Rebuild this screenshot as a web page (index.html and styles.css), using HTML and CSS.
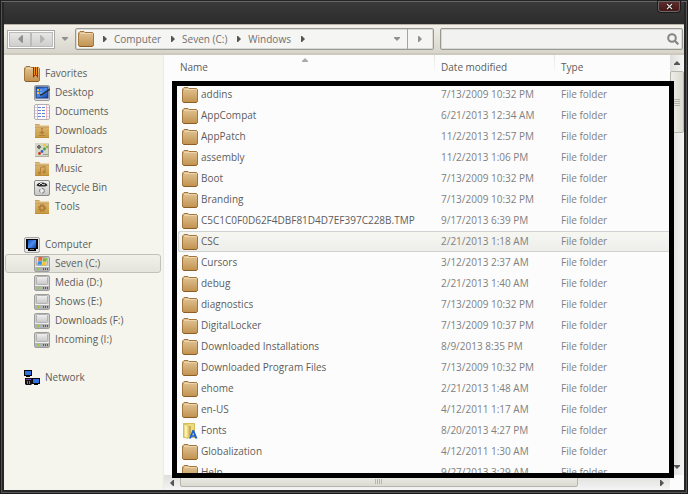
FILE: index.html
```html
<!DOCTYPE html>
<html lang="en">
<head>
<meta charset="utf-8">
<title>Windows</title>
<link rel="stylesheet" href="styles.css">
</head>
<body>
<svg class="defs" aria-hidden="true">
  <defs>
    <linearGradient id="tan" x1="0" y1="0" x2="0" y2="1"><stop offset="0" stop-color="#e2c597"/><stop offset="1" stop-color="#c1924f"/></linearGradient>
    <linearGradient id="gold" x1="0" y1="0" x2="0" y2="1"><stop offset="0" stop-color="#e0bd7c"/><stop offset="1" stop-color="#c89a40"/></linearGradient>
    <linearGradient id="blue" x1="0" y1="0" x2="1" y2="1"><stop offset="0" stop-color="#1450b8"/><stop offset=".5" stop-color="#4c8cf0"/><stop offset="1" stop-color="#0c3c9c"/></linearGradient>
    <linearGradient id="metal" x1="0" y1="0" x2="0" y2="1"><stop offset="0" stop-color="#f2f2f2"/><stop offset="1" stop-color="#c6c6c6"/></linearGradient>
    <symbol id="folder" viewBox="0 0 16 16">
      <path d="M1 4V1.5L2 .5H6L7 1.500H14.500L15.500 2.500V14.500L14.500 15.500H1.500L.5 14.500V2.500Z" fill="url(#tan)" stroke="#a3763c"/>
      <path d="M1.500 3.500L2.500 2.500H13.500L14.500 3.500" fill="none" stroke="#ecd5ae"/>
      <path d="M1 14.500L2 15.500H14L15 14.500" fill="none" stroke="#8c5d24"/>
    </symbol>
    <symbol id="favorites" viewBox="0 0 16 16">
      <use href="#folder" width="16" height="16"/>
      <path d="M9 1H14V12L11.500 9L9 12Z" fill="#b81c08"/>
      <path d="M10.500 1V9M12.500 1V9" stroke="#f49018"/>
    </symbol>
    <symbol id="desktop" viewBox="0 0 16 16">
      <rect x=".5" y=".5" width="15" height="15" rx="1.500" fill="#d9dde3" stroke="#9a9a9c"/>
      <rect x="2" y="2" width="12" height="11" fill="url(#blue)" stroke="#173a78"/>
      <path d="M3 5H5M3 8H5" stroke="#f5c23c" stroke-width="2"/>
      <path d="M6 5H8M6 8H8" stroke="#9fc2f8"/>
      <path d="M16 4L8 9.500L6 10" fill="none" stroke="#2a2d33" stroke-width="1.500"/>
    </symbol>
    <symbol id="documents" viewBox="0 0 16 16">
      <rect x=".5" y=".5" width="15" height="15" rx="1.500" fill="#fafaff" stroke="#b2adb4"/>
      <path d="M3.500 1V15M12.500 1V15" stroke="#f4b3ba"/>
      <path d="M4 3.500H12M4 6.500H12M4 9.500H12M4 12.500H12" stroke="#5f83cd" stroke-dasharray="3 1"/>
      <path d="M1 3.500H3M1 6.500H3M1 9.500H3M1 12.500H3M13 3.500H15M13 6.500H15M13 9.500H15M13 12.500H15" stroke="#e9c5d0"/>
    </symbol>
    <symbol id="goldfolder" viewBox="0 0 16 16">
      <path d="M1 1H5.500L6.500 2.500H15V15H1Z" fill="url(#gold)"/>
      <path d="M1 1.500H5M1 4.500H15" stroke="#c9a468"/>
      <path d="M1 14.500H15" stroke="#bd8c34"/>
    </symbol>
    <symbol id="downloads" viewBox="0 0 16 16">
      <use href="#goldfolder" width="16" height="16"/>
      <path d="M7 5H9V6.500H7ZM7 7.500H9V9H11L8 11.500L5 9H7ZM5 12H11V13H5Z" fill="#b28138"/>
    </symbol>
    <symbol id="emulators" viewBox="0 0 16 16">
      <rect x="1" y="1" width="14" height="14" fill="#d6d6c5"/>
      <path d="M1 14.500H15M14.500 2V15" stroke="#b0b09c"/>
      <path d="M3 5H7M5 3V7" stroke="#6e6e6e" stroke-width="2"/>
      <circle cx="10.500" cy="3" r="1.300" fill="#f0c52a"/><circle cx="13" cy="5" r="1.200" fill="#86b84a"/>
      <circle cx="10.500" cy="7" r="1.400" fill="#3ea03c"/><circle cx="8" cy="9.500" r="1.400" fill="#2a64c8"/>
      <circle cx="5.500" cy="11.500" r="1.400" fill="#d43322"/><path d="M9 12.500H14" stroke="#9a9a8a"/>
    </symbol>
    <symbol id="music" viewBox="0 0 16 16">
      <use href="#goldfolder" width="16" height="16"/>
      <path d="M6.500 12V6.500L11 5.500V11" fill="none" stroke="#b28138"/>
      <circle cx="5.500" cy="12" r="1.500" fill="#b28138"/><circle cx="10" cy="11" r="1.500" fill="#b28138"/>
    </symbol>
    <symbol id="bin" viewBox="0 0 16 16">
      <rect x=".5" y=".5" width="15" height="15" rx="1.500" fill="url(#metal)" stroke="#8b8b8b"/>
      <path d="M2.500 5.500C3 1.500 13 1.500 13.500 5.500L11 6.500H5Z" fill="#28292b"/>
      <path d="M5 5L7 3L9 5L11 4" fill="none" stroke="#d8d8d8"/>
      <circle cx="8" cy="10.800" r="2.400" fill="#ececec" stroke="#777" stroke-dasharray="3.500 1.500"/>
    </symbol>
    <symbol id="tools" viewBox="0 0 16 16">
      <use href="#goldfolder" width="16" height="16"/>
      <circle cx="8" cy="9" r="3.300" fill="none" stroke="#b28138" stroke-width="1.500" stroke-dasharray="1.700 .9"/>
      <circle cx="8" cy="9" r="2.200" fill="none" stroke="#b28138" stroke-width="1.800"/>
    </symbol>
    <symbol id="computer" viewBox="0 0 16 16">
      <rect x=".5" y=".5" width="15" height="15" rx="1.500" fill="#e3e3e3" stroke="#a4a4a4"/>
      <path d="M2 2H14V12H12V14H4V12H2Z" fill="#06080e"/>
      <rect x="4" y="3" width="8" height="8" fill="url(#blue)"/>
      <path d="M6 12.500H10" stroke="#777"/>
    </symbol>
    <symbol id="drive" viewBox="0 0 16 16">
      <rect x=".5" y=".5" width="15" height="15" rx="1.500" fill="#d0d0d0" stroke="#9d9d9d"/>
      <rect x="2.500" y="1.500" width="11" height="8" rx="1" fill="url(#metal)" stroke="#b2b2b2"/>
      <path d="M1 11H15V15H1Z" fill="#b2b2b2"/>
      <path d="M1 10.500H15" stroke="#eee"/>
      <path d="M3 13H5" stroke="#8bd136" stroke-width="2"/>
      <path d="M9.500 12V14M11.500 12V14M13.500 12V14" stroke="#5c5c5c"/>
    </symbol>
    <symbol id="windrive" viewBox="0 0 16 16">
      <use href="#drive" width="16" height="16"/>
      <path d="M4.500 1.500Q6.500 .2 8.500 1.500L8 5Q6 4 4 5Z" fill="#ee622c"/>
      <path d="M9 1.700Q11 3 13 1.700L12.500 5.200Q10.500 6.200 8.500 5.200Z" fill="#80b83b"/>
      <path d="M4 5.500Q6 4.500 8 5.500L7.500 9Q5.500 8 3.500 9Z" fill="#3f8fdc"/>
      <path d="M8.500 5.700Q10.500 7 12.500 5.700L12 9.200Q10 10 8 9.200Z" fill="#f7c530"/>
    </symbol>
    <symbol id="network" viewBox="0 0 16 16">
      <path d="M0 0H8V6H6V7H2V6H0Z" fill="#080808"/><rect x="1" y="1" width="6" height="4" fill="#2e71df"/>
      <path d="M8 8H16V14H14V15H10V14H8Z" fill="#080808"/><rect x="9" y="9" width="6" height="4" fill="#2e71df"/>
      <path d="M1 8H8V14L7 15H2L1 14Z" fill="#151018"/>
      <path d="M2 9.500H7" stroke="#7540b8"/><path d="M3.500 11V14M5.500 11V14" stroke="#777"/>
    </symbol>
    <symbol id="fonts" viewBox="0 0 16 16">
      <path d="M1.500 .5H12.500V14.500H1.500Z" fill="#ecd980" stroke="#d6bd5b"/>
      <path d="M2 1L6 2.500V15.500L2 14Z" fill="#fbf2ae" stroke="#d6bd5b"/>
      <path d="M7 3H9V13H7Z" fill="#c4ae60"/>
      <path d="M7 15.500L10.500 7H12L15.500 15.500H13.200L12.600 13.800H9.700L9 15.500ZM10.200 12.300H12.100L11.200 9.500Z" fill="#1b61d1"/>
    </symbol>
    <symbol id="right" viewBox="0 0 4 6"><path d="M0 0H1L4 3L1 6H0Z"/></symbol>
    <symbol id="left" viewBox="0 0 4 6"><path d="M4 0H3L0 3L3 6H4Z"/></symbol>
    <symbol id="down" viewBox="0 0 6 4"><path d="M0 0V1L3 4L6 1V0Z"/></symbol>
    <symbol id="up" viewBox="0 0 6 4"><path d="M0 4V3L3 0L6 3V4Z"/></symbol>
  </defs>
</svg>
<div class="window">
  <header class="titlebar">
    <button class="close" aria-label="Close"><svg viewBox="0 0 7 7" width="7" height="7"><path d="M1 1L6 6M6 1L1 6" stroke="#160808" stroke-width="2.600"/><path d="M1 1L6 6M6 1L1 6" stroke="#e9dede" stroke-width="1.200"/></svg></button>
  </header>
  <div class="toolbar">
    <div class="history">
      <button aria-label="Back"><svg class="arrow side big mid"><use href="#left"/></svg></button>
      <button aria-label="Forward"><svg class="arrow side big pale"><use href="#right"/></svg></button>
    </div>
    <button class="recent" aria-label="Recent pages"><svg class="arrow flat mid"><use href="#down"/></svg></button>
    <nav class="address" aria-label="Address">
      <svg class="icon"><use href="#folder"/></svg>
      <svg class="arrow side"><use href="#right"/></svg>
      <a href="#">Computer</a>
      <svg class="arrow side"><use href="#right"/></svg>
      <a href="#">Seven (C:)</a>
      <svg class="arrow side"><use href="#right"/></svg>
      <a href="#">Windows</a>
      <svg class="arrow side"><use href="#right"/></svg>
      <button class="previous" aria-label="Previous locations"><svg class="arrow flat mid"><use href="#down"/></svg></button>
      <button class="go" aria-label="Go"><svg class="arrow side mid"><use href="#right"/></svg></button>
    </nav>
    <label class="search">
      <input type="text" aria-label="Search">
      <svg viewBox="0 0 12 12" width="12" height="12"><circle cx="5" cy="5" r="3.800" fill="none" stroke="#858585" stroke-width="2"/><path d="M7.800 7.800L11.300 11.300" stroke="#858585" stroke-width="2.200"/></svg>
    </label>
  </div>
  <div class="main">
    <nav class="sidebar" aria-label="Folders">
      <section>
        <a class="root" href="#"><svg class="icon"><use href="#favorites"/></svg>Favorites</a>
        <a href="#"><svg class="icon"><use href="#desktop"/></svg>Desktop</a>
        <a href="#"><svg class="icon"><use href="#documents"/></svg>Documents</a>
        <a href="#"><svg class="icon"><use href="#downloads"/></svg>Downloads</a>
        <a href="#"><svg class="icon"><use href="#emulators"/></svg>Emulators</a>
        <a href="#"><svg class="icon"><use href="#music"/></svg>Music</a>
        <a href="#"><svg class="icon"><use href="#bin"/></svg>Recycle Bin</a>
        <a href="#"><svg class="icon"><use href="#tools"/></svg>Tools</a>
      </section>
      <section>
        <a class="root" href="#"><svg class="icon"><use href="#computer"/></svg>Computer</a>
        <a class="selected" href="#"><svg class="icon"><use href="#windrive"/></svg>Seven (C:)</a>
        <a href="#"><svg class="icon"><use href="#drive"/></svg>Media (D:)</a>
        <a href="#"><svg class="icon"><use href="#drive"/></svg>Shows (E:)</a>
        <a href="#"><svg class="icon"><use href="#drive"/></svg>Downloads (F:)</a>
        <a href="#"><svg class="icon"><use href="#drive"/></svg>Incoming (I:)</a>
      </section>
      <section>
        <a class="root" href="#"><svg class="icon"><use href="#network"/></svg>Network</a>
      </section>
    </nav>
    <div class="content">
      <div class="pane">
        <svg class="arrow flat sort"><use href="#up"/></svg>
        <table>
          <colgroup><col class="name"><col class="date"><col></colgroup>
          <thead><tr><th>Name</th><th>Date modified</th><th>Type</th></tr></thead>
          <tbody>
            <tr><td><svg class="icon"><use href="#folder"/></svg>addins</td><td>7/13/2009 10:32 PM</td><td>File folder</td></tr>
            <tr><td><svg class="icon"><use href="#folder"/></svg>AppCompat</td><td>6/21/2013 12:34 AM</td><td>File folder</td></tr>
            <tr><td><svg class="icon"><use href="#folder"/></svg>AppPatch</td><td>11/2/2013 12:57 PM</td><td>File folder</td></tr>
            <tr><td><svg class="icon"><use href="#folder"/></svg>assembly</td><td>11/2/2013 1:06 PM</td><td>File folder</td></tr>
            <tr><td><svg class="icon"><use href="#folder"/></svg>Boot</td><td>7/13/2009 10:32 PM</td><td>File folder</td></tr>
            <tr><td><svg class="icon"><use href="#folder"/></svg>Branding</td><td>7/13/2009 10:32 PM</td><td>File folder</td></tr>
            <tr><td><svg class="icon"><use href="#folder"/></svg>C5C1C0F0D62F4DBF81D4D7EF397C228B.TMP</td><td>9/17/2013 6:39 PM</td><td>File folder</td></tr>
            <tr class="current"><td><svg class="icon"><use href="#folder"/></svg>CSC</td><td>2/21/2013 1:18 AM</td><td>File folder</td></tr>
            <tr><td><svg class="icon"><use href="#folder"/></svg>Cursors</td><td>3/12/2013 2:37 AM</td><td>File folder</td></tr>
            <tr><td><svg class="icon"><use href="#folder"/></svg>debug</td><td>2/21/2013 1:40 AM</td><td>File folder</td></tr>
            <tr><td><svg class="icon"><use href="#folder"/></svg>diagnostics</td><td>7/13/2009 10:32 PM</td><td>File folder</td></tr>
            <tr><td><svg class="icon"><use href="#folder"/></svg>DigitalLocker</td><td>7/13/2009 10:37 PM</td><td>File folder</td></tr>
            <tr><td><svg class="icon"><use href="#folder"/></svg>Downloaded Installations</td><td>8/9/2013 8:35 PM</td><td>File folder</td></tr>
            <tr><td><svg class="icon"><use href="#folder"/></svg>Downloaded Program Files</td><td>7/13/2009 10:32 PM</td><td>File folder</td></tr>
            <tr><td><svg class="icon"><use href="#folder"/></svg>ehome</td><td>2/21/2013 1:48 AM</td><td>File folder</td></tr>
            <tr><td><svg class="icon"><use href="#folder"/></svg>en-US</td><td>4/12/2011 1:17 AM</td><td>File folder</td></tr>
            <tr><td><svg class="icon"><use href="#fonts"/></svg>Fonts</td><td>8/20/2013 4:27 PM</td><td>File folder</td></tr>
            <tr><td><svg class="icon"><use href="#folder"/></svg>Globalization</td><td>4/12/2011 1:30 AM</td><td>File folder</td></tr>
            <tr><td><svg class="icon"><use href="#folder"/></svg>Help</td><td>9/27/2013 3:29 AM</td><td>File folder</td></tr>
          </tbody>
        </table>
      </div>
      <div class="vbar">
        <button aria-label="Scroll up"><svg class="arrow flat"><use href="#up"/></svg></button>
        <div class="vtrack"><div class="thumb"><i></i></div></div>
        <button aria-label="Scroll down"><svg class="arrow flat"><use href="#down"/></svg></button>
      </div>
      <div class="hbar">
        <button aria-label="Scroll left"><svg class="arrow side"><use href="#left"/></svg></button>
        <div class="htrack"><div class="thumb"><i></i></div></div>
        <button aria-label="Scroll right"><svg class="arrow side"><use href="#right"/></svg></button>
      </div>
      <div class="highlight"></div>
    </div>
  </div>
</div>
</body>
</html>
```
FILE: styles.css
```css
* { box-sizing: border-box; }

body {
  margin: 0;
  color: #5c5c5c;
  font: 10px/19px "Open Sans", sans-serif;
}

button {
  display: flex;
  align-items: center;
  justify-content: center;
  padding: 0;
  border: 0;
  background: none;
}

a { color: inherit; text-decoration: none; }

.defs { position: absolute; width: 0; height: 0; }
.icon { flex: none; width: 16px; height: 16px; }
.arrow { flex: none; fill: #555; }
.side { width: 4px; height: 6px; }
.flat { width: 6px; height: 4px; }
.big { width: 5px; height: 8px; }
.mid { fill: #919191; }
.pale { fill: #b5b5b5; }

.window {
  display: flex;
  flex-direction: column;
  height: 100vh;
  padding: 0 3px 3px;
  border: 1px solid #1b1a1a;
  border-top-color: #242424;
  background: #272626;
  box-shadow: inset 0 1px #686868, inset 1px 0 #55504c, inset -1px -1px #555;
}

.titlebar {
  display: flex;
  flex: none;
  justify-content: flex-end;
  height: 23px;
  padding-right: 4px;
  background: linear-gradient(#686868 1px, #393939 1px, #2c2c2c);
}

.close {
  width: 22px;
  height: 11px;
  border: 1px solid #6b6464;
  border-radius: 0 0 3px 3px;
  background: linear-gradient(#5c2c2c, #471818);
  box-shadow: 0 0 0 1px #1d1b1b;
}

.toolbar {
  display: flex;
  flex: none;
  align-items: center;
  height: 31px;
  padding: 0 1px 0 3px;
  border-top: 1px solid #b9b2a7;
  border-bottom: 2px solid #cdc9bc;
  background: linear-gradient(#f2f0e9, #e4e2d9 50%, #d8d6cb);
}

.history {
  display: flex;
  height: 19px;
  padding: 1px;
  border: 1px solid #a8a8a6;
  background: #fff;
}

.history button {
  width: 22px;
  border: 1px solid #bbb;
  background: linear-gradient(#e6e6e5, #cfcfce);
}

.recent { width: 20px; height: 19px; }

.address {
  display: flex;
  align-items: center;
  flex: 360 1 0;
  height: 22px;
  padding-left: 2px;
  border: 1px solid #999994;
  border-radius: 2px;
  background: #f5f5f3;
  box-shadow: inset 0 0 0 1px #d9d9d6;
  color: #707070;
}

.address .icon { margin-right: 9px; }
.address a { margin: 0 10px 0 7px; }
.previous { width: 20px; margin-left: auto; }
.go { align-self: stretch; width: 26px; border-left: 1px solid #a3a3a0; }

.search {
  display: flex;
  align-items: center;
  flex: 242 1 0;
  height: 22px;
  margin-left: 6px;
  padding-right: 3px;
  border: 1px solid #999994;
  border-radius: 2px;
  background: #f2f2f0;
  box-shadow: inset 0 0 0 1px #d9d9d6;
}

.search input {
  flex: 1;
  min-width: 0;
  padding: 0 4px;
  border: 0;
  outline: 0;
  background: none;
  font: inherit;
}

.main { display: flex; flex: 1; min-height: 0; background: #fcfcfc; }

.sidebar {
  display: flex;
  flex: none;
  flex-direction: column;
  gap: 19px;
  width: 160px;
  padding: 9px 2px 0 1px;
  border-right: 1px solid #e9e9e5;
  background: #f5f5ed;
}

.sidebar a {
  display: flex;
  align-items: center;
  gap: 5px;
  height: 19px;
  padding-left: 28px;
  border: 1px solid transparent;
  border-radius: 3px;
}

.sidebar .root { padding-left: 18px; }
.sidebar .selected { border-color: #c1c1ba; background: linear-gradient(#f1f1e9, #e4e4dd); }

.content {
  display: grid;
  position: relative;
  flex: 1;
  grid-template: minmax(0, 1fr) 15px / minmax(0, 1fr) 14px;
  min-width: 0;
}

.pane { position: relative; overflow: hidden; padding-left: 14px; }

.sort { position: absolute; top: 3px; left: 138px; fill: #aaa; }

table { width: 100%; border-collapse: separate; border-spacing: 0; table-layout: fixed; }

.name { width: 257px; }
.date { width: 120px; }

th {
  height: 29px;
  padding: 0 0 4px 6px;
  background: linear-gradient(#e4e4e2, #fcfcfc) right top / 1px 20px no-repeat;
  font-weight: 400;
  text-align: left;
}

th:first-child { padding-left: 2px; }
th:last-child { background: none; }

td { height: 21px; padding: 0 0 0 6px; color: #808080; white-space: nowrap; }
td:first-child { display: flex; align-items: center; gap: 3px; padding-left: 4px; color: #5c5c5c; }

.current td {
  background: linear-gradient(#f7f7f2, #ededeb);
  box-shadow: inset 0 1px #d2d2cf, inset 0 -1px #d2d2cf;
}

.current td:first-child {
  border-radius: 2px 0 0 2px;
  box-shadow: inset 1px 1px #d2d2cf, inset 0 -1px #d2d2cf;
}

.vbar {
  display: flex;
  flex-direction: column;
  background: linear-gradient(90deg, #dededc, #f5f5f5);
}

.vbar button { height: 16px; }
.vtrack { flex: 1; min-height: 0; }

.thumb {
  display: flex;
  align-items: center;
  justify-content: center;
  border: 1px solid #b5b7ac;
  border-radius: 2px;
  background: linear-gradient(#eeeee8, #dadad1);
}

.vtrack .thumb {
  height: 16%;
  background: linear-gradient(90deg, #eeeee8, #dadad1);
}

.vtrack i { width: 6px; height: 7px; background: repeating-linear-gradient(#b5b5aa 0 1px, transparent 1px 2px); }

.hbar {
  display: flex;
  background: linear-gradient(#dededc, #f5f5f5);
}

.hbar button { width: 16px; }
.htrack { flex: 1; min-width: 0; }
.htrack .thumb { width: 84%; height: 12px; }
.htrack i { width: 8px; height: 5px; background: repeating-linear-gradient(90deg, #b5b5aa 0 1px, transparent 1px 2px); }

.highlight {
  position: absolute;
  inset: 26px 10px 12px 8px;
  border: 5px solid #000;
  pointer-events: none;
}
```
